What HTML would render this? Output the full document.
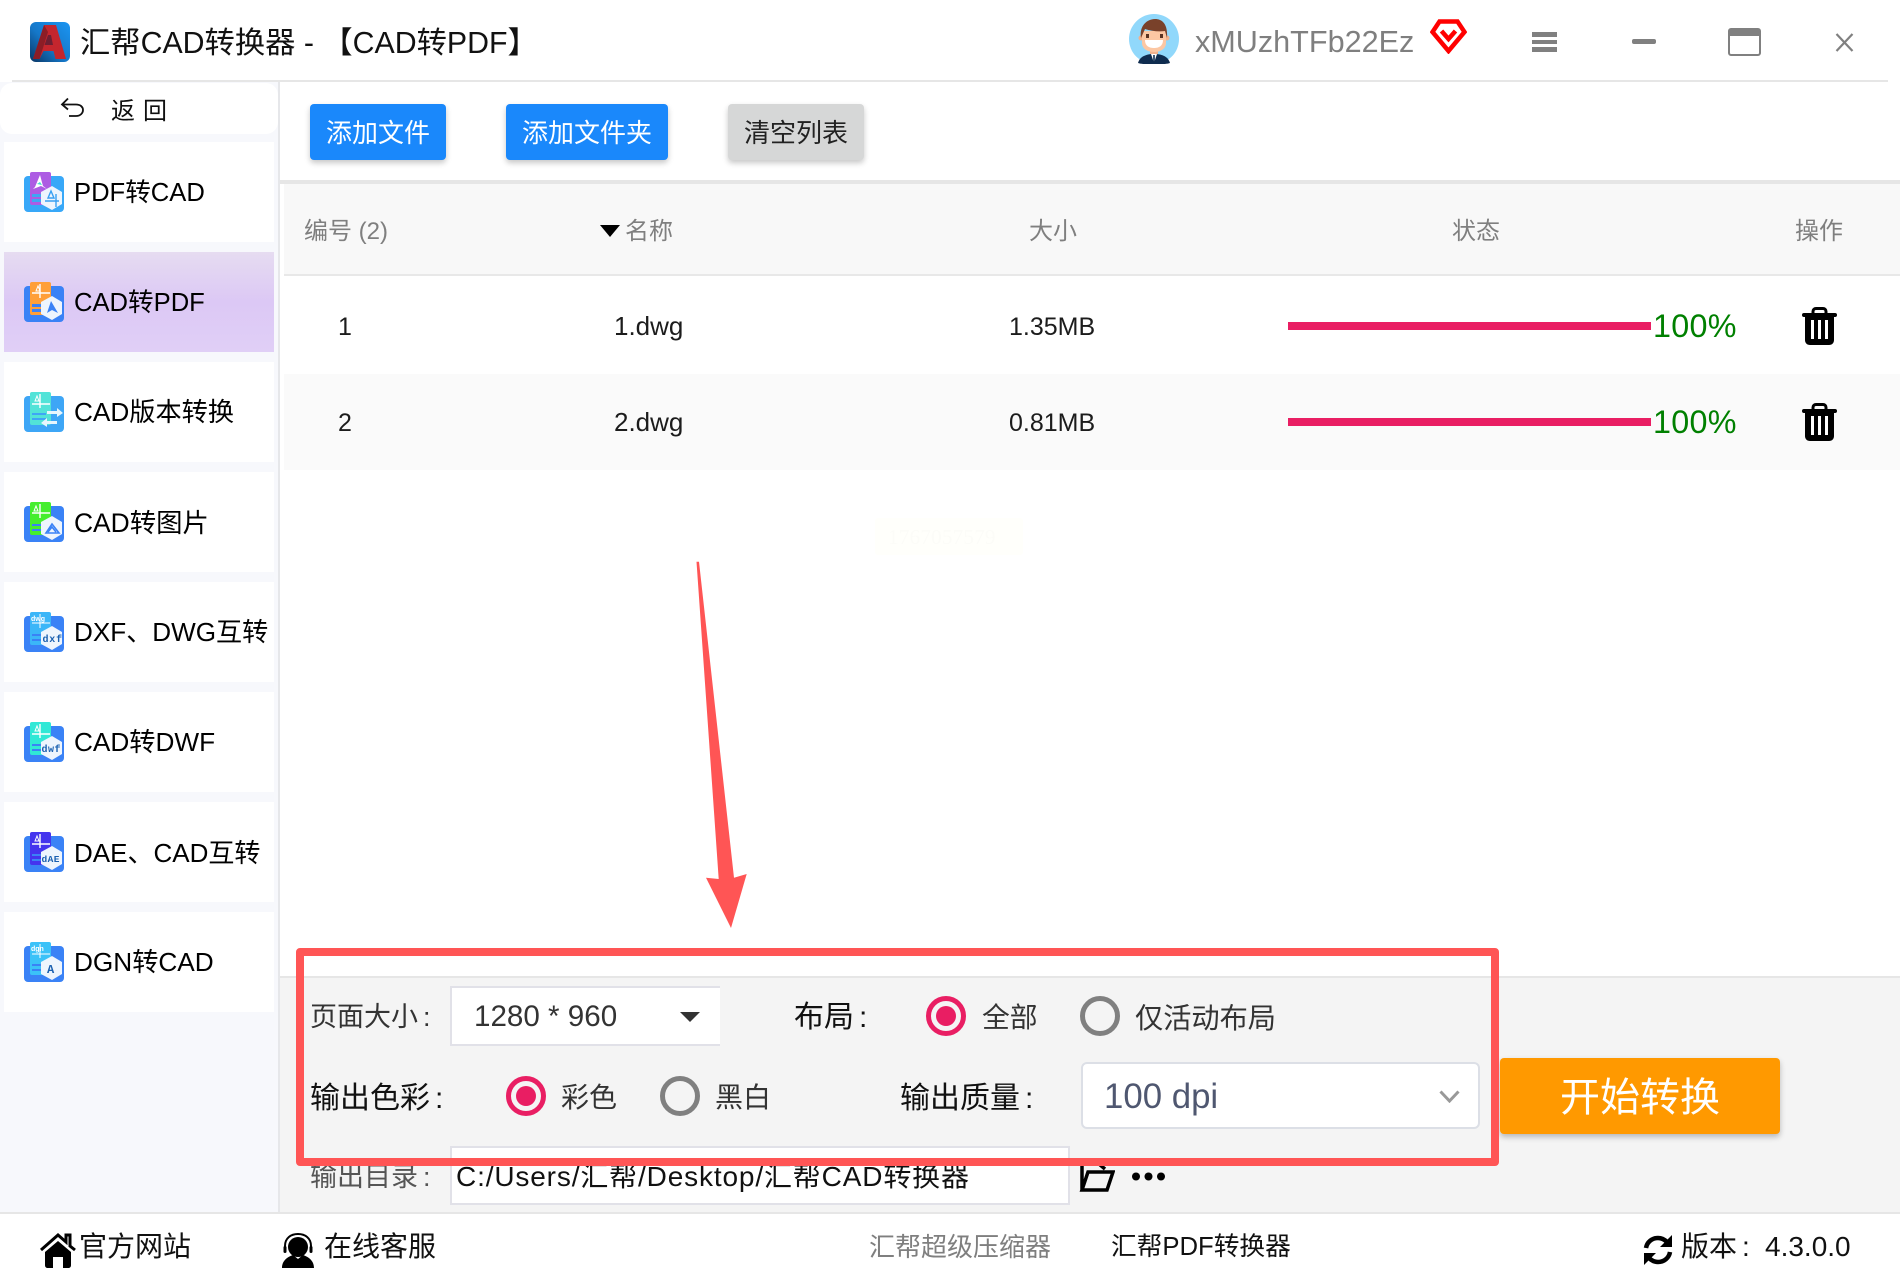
<!DOCTYPE html>
<html lang="zh-CN">
<head>
<meta charset="utf-8">
<title>汇帮CAD转换器</title>
<style>
html,body{margin:0;padding:0;background:#fff}
body{width:1900px;height:1280px;position:relative;overflow:hidden;font-family:"Liberation Sans","Noto Sans CJK SC",sans-serif;color:#000}
.a{position:absolute}
.t{position:absolute;white-space:nowrap;line-height:40px;height:40px}
.t i{font-style:normal;margin-left:5px}
.item{position:absolute;left:4px;width:270px;height:100px;background:#fff}
.item svg{position:absolute;left:20px;top:30px}
.item span{position:absolute;left:70px;top:30px;line-height:40px;font-size:26px;white-space:nowrap;color:#000}
.btn{position:absolute;top:104px;height:56px;line-height:58px;text-align:center;font-size:26px;color:#fff;background:#1a88fb;border-radius:4px;box-shadow:0 3px 6px rgba(0,0,0,.22)}
.radio{position:absolute;width:40px;height:40px;border-radius:50%;box-sizing:border-box;border:5px solid #808080}
.radio.on{border-color:#e91e63}
.radio.on::after{content:"";position:absolute;left:5px;top:5px;width:20px;height:20px;border-radius:50%;background:#e91e63}
.bar{position:absolute;left:1288px;width:363px;height:8px;background:#e91e63}
.pct{position:absolute;left:1653px;font-size:32.300px;line-height:40px;color:#008000;letter-spacing:.3px}
.hd{color:#7f7f7f;font-size:24px}
.cell{font-size:25px;color:#1c1c1c}
</style>
</head>
<body>
<!-- title bar -->
<svg class="a" style="left:30px;top:22px" width="40" height="40" viewBox="0 0 40 40"><defs><linearGradient id="lg" x1="1" y1="0" x2="0" y2="1"><stop offset="0" stop-color="#1b96f3"/><stop offset=".55" stop-color="#1577c8"/><stop offset="1" stop-color="#0a3563"/></linearGradient></defs><rect width="40" height="40" rx="6" fill="url(#lg)"/><path d="M14 3H26L36 37H25.500L23.500 29H13.500L9.500 37H3Z" fill="#c4262e"/><path d="M18 13H21L23 23H14.500Z" fill="#6e1f33"/><path d="M14 3L3 37H9.500L18 10Z" fill="#8c1d26"/></svg>
<div class="t" style="left:80px;top:24px;font-size:30.300px;color:#111">汇帮CAD转换器 - 【CAD转PDF】</div>

<svg class="a" style="left:1129px;top:14px" width="50" height="50" viewBox="0 0 50 50"><circle cx="25" cy="25" r="25" fill="#91d8fb"/><path d="M9 49c2-7 9-9 16-9s14 2 16 9c-5 2-27 2-32 0z" fill="#0f2c4f"/><path d="M22 40l3 9 3-9z" fill="#fff"/><rect x="24.200" y="41" width="1.600" height="8" fill="#0f2c4f"/><rect x="21" y="33" width="8" height="7" fill="#f2b28d"/><circle cx="12" cy="24" r="2.500" fill="#f2b28d"/><circle cx="38" cy="24" r="2.500" fill="#f2b28d"/><path d="M13 17h24v12c0 6-6 9-12 9s-12-3-12-9z" fill="#fcc7a3"/><path d="M12 24c-2-12 6-19 14-19 8 0 13 6 12 19l-2-7c-6 1-14 0-20-2z" fill="#79412a"/><rect x="17" y="20" width="3" height="4" fill="#5a3322"/><rect x="31" y="20" width="3" height="4" fill="#5a3322"/><path d="M16 26h18c0 6-4 8-9 8s-9-2-9-8z" fill="#fff"/></svg>
<div class="t" style="left:1195px;top:22px;font-size:30.600px;color:#7f7f7f">xMUzhTFb22Ez</div>
<svg class="a" style="left:1430px;top:19px" width="37" height="35" viewBox="0 0 37 35"><path d="M9.500 2.500H27.500L34.500 13 18.500 32 2.500 13Z" fill="none" stroke="#f00" stroke-width="4.500" stroke-linejoin="miter"/><path d="M11.500 12L18.500 20 25.500 12" fill="none" stroke="#f00" stroke-width="4.500"/></svg>
<div class="a" style="left:1532px;top:32px;width:25px;height:5px;background:#808080"></div>
<div class="a" style="left:1532px;top:40px;width:25px;height:4px;background:#808080"></div>
<div class="a" style="left:1532px;top:47px;width:25px;height:5px;background:#808080"></div>
<div class="a" style="left:1632px;top:39px;width:24px;height:5px;background:#808080;border-radius:2px"></div>
<div class="a" style="left:1728px;top:28px;width:33px;height:28px;box-sizing:border-box;border:2px solid #808080;border-top:8px solid #808080;border-radius:3px"></div>
<svg class="a" style="left:1835px;top:33px" width="19" height="19" viewBox="0 0 19 19"><path d="M1.500 1L17.500 18M17.500 1L1.500 18" stroke="#808080" stroke-width="2.200" fill="none"/></svg>
<div class="a" style="left:12px;top:80px;width:1876px;height:2px;background:#e6e6e6"></div>

<!-- sidebar -->
<div class="a" style="left:0;top:82px;width:278px;height:1130px;background:#f7f8fc"></div>
<div class="a" style="left:278px;top:82px;width:2px;height:1130px;background:#e6e7ea"></div>
<div class="a" style="left:0;top:83px;width:278px;height:51px;background:#fff;border-radius:12px"></div>
<svg class="a" style="left:60px;top:97px" width="25" height="21" viewBox="0 0 25 21"><path d="M8 1.500L2 7.500 8 12.500M2 7.500H16C20.500 7.500 23 10 23 13S20.500 19 16 19H9" fill="none" stroke="#111" stroke-width="1.800"/></svg>
<div class="t" style="left:111px;top:92px;font-size:24px;letter-spacing:8px;color:#111">返回</div>

<div class="item" style="top:142px"><svg width="40" height="40" viewBox="0 0 40 40"><rect y="4" width="40" height="36" rx="4" fill="#38a8f8"/><rect x="6" width="21" height="33" rx="2" fill="#ad5ce3"/><path d="M16 3l-5 12-2 2 8-3 6 3-4-3z" fill="#fff"/><path d="M13 12l3-2 2 3z" fill="#3fe0d0"/><rect x="8" y="22" width="12" height="3" fill="#3ea6f4"/><rect x="8" y="27" width="12" height="3" fill="#3ea6f4"/><path d="M28 14l10 6v12l-10 6-11-6V20z" fill="#eef5fd"/><path d="M27 19l-3 7h6zM21 29h14M32 22v13" stroke="#38a0f2" stroke-width="1.400" fill="none"/></svg><span style="top:31px;font-size:25.600px">PDF转CAD</span></div>

<div class="item" style="top:252px;background:linear-gradient(#e6dcf1 0,#dcc8f5 50%,#e0cff6 100%)"><svg width="40" height="40" viewBox="0 0 40 40"><rect y="4" width="40" height="36" rx="4" fill="#3a82f6"/><rect x="6" width="21" height="33" rx="2" fill="#ff9f38"/><path d="M8 11H26M16 2v14" stroke="#fff" stroke-width="1.400"/><path d="M12 9l2-5 2 5z" fill="none" stroke="#fff" stroke-width="1"/><rect x="8" y="22" width="12" height="3" fill="#3a82f6"/><rect x="8" y="27" width="12" height="3" fill="#3a82f6"/><path d="M28 14l10 6v12l-10 6-11-6V20z" fill="#eef5fd"/><path d="M27 19l-4 12 5-3 6 3zM25 27h7" fill="#3a82f6"/></svg><span style="top:31px;font-size:25.600px">CAD转PDF</span></div>

<div class="item" style="top:362px"><svg width="40" height="40" viewBox="0 0 40 40"><rect y="4" width="40" height="36" rx="4" fill="#3ea6f6"/><rect x="6" width="21" height="33" rx="2" fill="#52e3d8"/><path d="M8 12H26M16 2v14" stroke="#fff" stroke-width="1.400"/><path d="M11 9l2-5 2 5z" fill="none" stroke="#fff" stroke-width="1"/><rect x="8" y="21" width="14" height="2" fill="#3ea6f6"/><rect x="8" y="26" width="14" height="2" fill="#3ea6f6"/><path d="M23 19H33V16L39 21 33 25V22H23zM33 29H23V26L17 31 23 35V32H33z" fill="#e8f6fd"/></svg><span style="top:30px;font-size:26.200px">CAD版本转换</span></div>

<div class="item" style="top:472px"><svg width="40" height="40" viewBox="0 0 40 40"><rect y="4" width="40" height="36" rx="4" fill="#3a82f6"/><rect x="6" width="21" height="33" rx="2" fill="#45ee2e"/><path d="M8 11H26M16 2v14" stroke="#fff" stroke-width="1.400"/><path d="M10 9l2-5 2 5z" fill="none" stroke="#fff" stroke-width="1"/><rect x="8" y="22" width="12" height="2" fill="#3a82f6"/><rect x="8" y="27" width="12" height="2" fill="#3a82f6"/><path d="M28 14l10 6v12l-10 6-11-6V20z" fill="#eef5fd"/><path d="M22 31l6-9 7 9zM24 30l4-5 4 5" fill="none" stroke="#3a82f6" stroke-width="1.600"/></svg><span style="top:31px;font-size:26.400px">CAD转图片</span></div>

<div class="item" style="top:582px"><svg width="40" height="40" viewBox="0 0 40 40"><rect y="4" width="40" height="36" rx="4" fill="#3a82f6"/><rect x="6" width="21" height="33" rx="2" fill="#3bb6f8"/><text x="7" y="9" font-size="7" font-weight="700" fill="#fff" font-family="Liberation Sans">dwg</text><path d="M8 11H26M16 2v14" stroke="#fff" stroke-width="1"/><rect x="8" y="22" width="12" height="2" fill="#3a82f6"/><rect x="8" y="27" width="12" height="2" fill="#3a82f6"/><path d="M28 14l10 6v12l-10 6-11-6V20z" fill="#eef5fd"/><text x="18.500" y="30" font-size="10" font-weight="700" letter-spacing=".8" fill="#1a60b0" font-family="Liberation Mono">dxf</text></svg><span style="font-size:26.100px">DXF、DWG互转</span></div>

<div class="item" style="top:692px"><svg width="40" height="40" viewBox="0 0 40 40"><rect y="4" width="40" height="36" rx="4" fill="#3a82f6"/><rect x="6" width="21" height="33" rx="2" fill="#30e8d6"/><path d="M8 12H26M16 2v14" stroke="#fff" stroke-width="1.400"/><path d="M11 9l2-5 2 5z" fill="none" stroke="#fff" stroke-width="1"/><rect x="8" y="22" width="12" height="2" fill="#3a82f6"/><rect x="8" y="27" width="12" height="2" fill="#3a82f6"/><path d="M28 14l10 6v12l-10 6-11-6V20z" fill="#eef5fd"/><text x="17.500" y="30" font-size="10" font-weight="700" letter-spacing=".5" fill="#1a60b0" font-family="Liberation Mono">dwf</text></svg><span style="font-size:26.200px">CAD转DWF</span></div>

<div class="item" style="top:802px"><svg width="40" height="40" viewBox="0 0 40 40"><rect y="4" width="40" height="36" rx="4" fill="#3a82f6"/><rect x="6" width="21" height="33" rx="2" fill="#4434ee"/><path d="M8 12H26M16 2v14" stroke="#fff" stroke-width="1.400"/><path d="M11 9l2-5 2 5z" fill="none" stroke="#fff" stroke-width="1"/><rect x="8" y="22" width="12" height="2" fill="#3a82f6"/><rect x="8" y="27" width="12" height="2" fill="#3a82f6"/><path d="M28 14l10 6v12l-10 6-11-6V20z" fill="#eef5fd"/><text x="17.500" y="30" font-size="9.500" font-weight="700" letter-spacing=".4" fill="#1a60b0" font-family="Liberation Mono">dAE</text></svg><span style="top:31px">DAE、CAD互转</span></div>

<div class="item" style="top:912px"><svg width="40" height="40" viewBox="0 0 40 40"><rect y="4" width="40" height="36" rx="4" fill="#3a82f6"/><rect x="6" width="21" height="33" rx="2" fill="#3bc2f8"/><text x="7" y="9" font-size="7" font-weight="700" fill="#fff" font-family="Liberation Sans">dgn</text><path d="M8 12H26M16 2v14" stroke="#fff" stroke-width="1"/><rect x="8" y="22" width="12" height="2" fill="#3a82f6"/><rect x="8" y="27" width="12" height="2" fill="#3a82f6"/><path d="M28 14l10 6v12l-10 6-11-6V20z" fill="#eef5fd"/><text x="23" y="31" font-size="12" font-weight="700" fill="#1a60b0" font-family="Liberation Mono">A</text></svg><span style="font-size:26.200px">DGN转CAD</span></div>

<!-- toolbar -->
<div class="btn" style="left:310px;width:136px">添加文件</div>
<div class="btn" style="left:506px;width:162px">添加文件夹</div>
<div class="btn" style="left:728px;width:136px;background:#d6d7d7;color:#222">清空列表</div>
<div class="a" style="left:280px;top:180px;width:1620px;height:4px;background:#e6e6e6"></div>

<!-- table -->
<div class="a" style="left:284px;top:184px;width:1616px;height:90px;background:#f8f8f8"></div>
<div class="a" style="left:284px;top:274px;width:1616px;height:2px;background:#e8e8e8"></div>
<div class="a" style="left:284px;top:374px;width:1616px;height:96px;background:#fafafa"></div>
<div class="t hd" style="left:304px;top:212px">编号 (2)</div>
<svg class="a" style="left:600px;top:225px" width="20" height="12" viewBox="0 0 20 12"><path d="M0 0H20L10 12Z" fill="#000"/></svg>
<div class="t hd" style="left:625px;top:212px">名称</div>
<div class="t hd" style="left:1029px;top:212px">大小</div>
<div class="t hd" style="left:1452px;top:212px">状态</div>
<div class="t hd" style="left:1795px;top:212px">操作</div>

<div class="t cell" style="left:338px;top:307px">1</div>
<div class="t cell" style="left:614px;top:306px;font-size:26px">1.dwg</div>
<div class="t cell" style="left:1009px;top:307px">1.35MB</div>
<div class="bar" style="top:322px"></div>
<div class="pct" style="top:306px">100%</div>
<svg class="a" style="left:1802px;top:307px" width="35" height="38" viewBox="0 0 35 38"><path d="M11 7V4.500C11 2.500 12.500 1.500 14 1.500H21C22.500 1.500 24 2.500 24 4.500V7" fill="none" stroke="#000" stroke-width="3"/><rect x="0" y="6" width="35" height="4" rx="2" fill="#000"/><path d="M3 9H32V33C32 36 30 38 27 38H8C5 38 3 36 3 33Z" fill="#000"/><rect x="9" y="13" width="3" height="19" fill="#fff"/><rect x="16" y="13" width="3" height="19" fill="#fff"/><rect x="23" y="13" width="3" height="19" fill="#fff"/></svg>

<div class="t cell" style="left:338px;top:403px">2</div>
<div class="t cell" style="left:614px;top:402px;font-size:26px">2.dwg</div>
<div class="t cell" style="left:1009px;top:403px">0.81MB</div>
<div class="bar" style="top:418px"></div>
<div class="pct" style="top:402px">100%</div>
<svg class="a" style="left:1802px;top:403px" width="35" height="38" viewBox="0 0 35 38"><path d="M11 7V4.500C11 2.500 12.500 1.500 14 1.500H21C22.500 1.500 24 2.500 24 4.500V7" fill="none" stroke="#000" stroke-width="3"/><rect x="0" y="6" width="35" height="4" rx="2" fill="#000"/><path d="M3 9H32V33C32 36 30 38 27 38H8C5 38 3 36 3 33Z" fill="#000"/><rect x="9" y="13" width="3" height="19" fill="#fff"/><rect x="16" y="13" width="3" height="19" fill="#fff"/><rect x="23" y="13" width="3" height="19" fill="#fff"/></svg>

<!-- faint watermark -->
<div class="a" style="left:875px;top:518px;width:148px;height:37px;background:#fffffb;border-radius:3px"></div>
<div class="t" style="left:888px;top:517px;font-family:'Liberation Serif',serif;font-size:21.500px;color:#fcfcf8">1767057579</div>

<!-- bottom settings panel -->
<div class="a" style="left:280px;top:976px;width:1620px;height:236px;background:#f4f4f4"></div>
<div class="a" style="left:280px;top:976px;width:1620px;height:2px;background:#e6e6e6"></div>
<div class="a" style="left:0;top:1212px;width:1900px;height:2px;background:#e6e6e6"></div>

<div class="t" style="left:310px;top:997px;font-size:27px;color:#333">页面大小<i>:</i></div>
<div class="a" style="left:450px;top:986px;width:270px;height:60px;box-sizing:border-box;background:#fff;border:2px solid #e1e1e8;border-right:none"></div>
<div class="t" style="left:474px;top:997px;font-size:29.600px;color:#333">1280 * 960</div>
<svg class="a" style="left:680px;top:1012px" width="20" height="10" viewBox="0 0 20 10"><path d="M0 0H20L10 10Z" fill="#333"/></svg>
<div class="t" style="left:794px;top:998px;font-size:30px;color:#111">布局<i>:</i></div>
<div class="radio on" style="left:926px;top:996px"></div>
<div class="t" style="left:982px;top:998px;font-size:27.800px;color:#333">全部</div>
<div class="radio" style="left:1080px;top:996px"></div>
<div class="t" style="left:1135px;top:998px;font-size:28.200px;color:#333">仅活动布局</div>

<div class="t" style="left:310px;top:1079px;font-size:30px;color:#111">输出色彩<i>:</i></div>
<div class="radio on" style="left:506px;top:1076px"></div>
<div class="t" style="left:561px;top:1078px;font-size:28px;color:#333">彩色</div>
<div class="radio" style="left:660px;top:1076px"></div>
<div class="t" style="left:715px;top:1078px;font-size:28px;color:#333">黑白</div>
<div class="t" style="left:900px;top:1079px;font-size:30px;color:#111">输出质量<i>:</i></div>
<div class="a" style="left:1081px;top:1062px;width:399px;height:67px;box-sizing:border-box;background:#fff;border:2px solid #dcdfe6;border-radius:6px"></div>
<div class="t" style="left:1104px;top:1077px;font-size:34.800px;color:#4f5770">100 dpi</div>
<svg class="a" style="left:1439px;top:1090px" width="21" height="13" viewBox="0 0 21 13"><path d="M1.500 1.500L10.500 11 19.500 1.500" fill="none" stroke="#999" stroke-width="3"/></svg>
<div class="a" style="left:1500px;top:1058px;width:280px;height:76px;line-height:80px;text-align:center;font-size:40px;color:#fff;background:#ff9900;border-radius:4px;box-shadow:0 3px 6px rgba(0,0,0,.25)">开始转换</div>

<div class="t" style="left:310px;top:1157px;font-size:27px;color:#555">输出目录<i>:</i></div>
<div class="a" style="left:450px;top:1146px;width:620px;height:59px;box-sizing:border-box;background:#fff;border:2px solid #e1e1e8"></div>
<div class="t" style="left:456px;top:1157px;font-size:28px;letter-spacing:.85px;color:#111">C:/Users/汇帮/Desktop/汇帮CAD转换器</div>
<svg class="a" style="left:1079px;top:1160px" width="36" height="32" viewBox="0 0 36 32"><path d="M3 30V4H20L26 9M3 30H28L34 12H9L3 30Z" fill="none" stroke="#000" stroke-width="3.500"/></svg>
<svg class="a" style="left:1132px;top:1172px" width="33" height="9" viewBox="0 0 33 9"><circle cx="4" cy="4.500" r="4" fill="#000"/><circle cx="16.500" cy="4.500" r="4" fill="#000"/><circle cx="29" cy="4.500" r="4" fill="#000"/></svg>

<!-- footer -->
<svg class="a" style="left:40px;top:1233px" width="36" height="35" viewBox="0 0 36 35"><path d="M1 17L18 2 26 9V2H30V13L35 17" fill="none" stroke="#000" stroke-width="3"/><path d="M5 19L18 8 31 19V32C31 34 30 35 28 35H23V24H13V35H8C6 35 5 34 5 32Z" fill="#000"/></svg>
<div class="t" style="left:79px;top:1227px;font-size:28px;color:#111">官方网站</div>
<svg class="a" style="left:282px;top:1233px" width="32" height="35" viewBox="0 0 32 35"><path d="M3 17V13C3 5 9 1 16 1S29 5 29 13V17" fill="none" stroke="#000" stroke-width="2"/><circle cx="16" cy="14" r="10" fill="#000"/><path d="M0 35C0 28 5 24 11 22L16 26 21 22C27 24 32 28 32 35Z" fill="#000"/><rect x="1.500" y="13" width="3" height="7" rx="1.500" fill="#000"/><rect x="27.500" y="13" width="3" height="7" rx="1.500" fill="#000"/></svg>
<div class="t" style="left:324px;top:1227px;font-size:28px;color:#111">在线客服</div>
<div class="t" style="left:869px;top:1227px;font-size:26px;color:#7f7f7f">汇帮超级压缩器</div>
<div class="t" style="left:1111px;top:1227px;font-size:25.700px;color:#111">汇帮PDF转换器</div>
<svg class="a" style="left:1642px;top:1234px" width="32" height="32" viewBox="0 0 32 32"><path d="M4 14C5 8 10 4 16 4 20 4 23 6 25 8" fill="none" stroke="#000" stroke-width="4.500"/><path d="M30 1V13H18Z" fill="#000"/><path d="M28 18C27 24 22 28 16 28 12 28 9 26 7 24" fill="none" stroke="#000" stroke-width="4.500"/><path d="M2 31V19H14Z" fill="#000"/></svg>
<div class="t" style="left:1681px;top:1227px;font-size:28px;color:#111">版本<i>:</i></div>
<div class="t" style="left:1765px;top:1227px;font-size:28px;color:#111">4.3.0.0</div>

<!-- annotations -->
<div class="a" style="left:296px;top:948px;width:1203px;height:218px;box-sizing:border-box;border:8px solid #ff5555;border-radius:4px"></div>
<svg class="a" style="left:690px;top:555px" width="70" height="380" viewBox="690 555 70 380"><path d="M696.500 561.700H699L734 877.700 746.700 874 731 928 706 877.700 718.700 879Z" fill="#ff5555"/></svg>
</body>
</html>
